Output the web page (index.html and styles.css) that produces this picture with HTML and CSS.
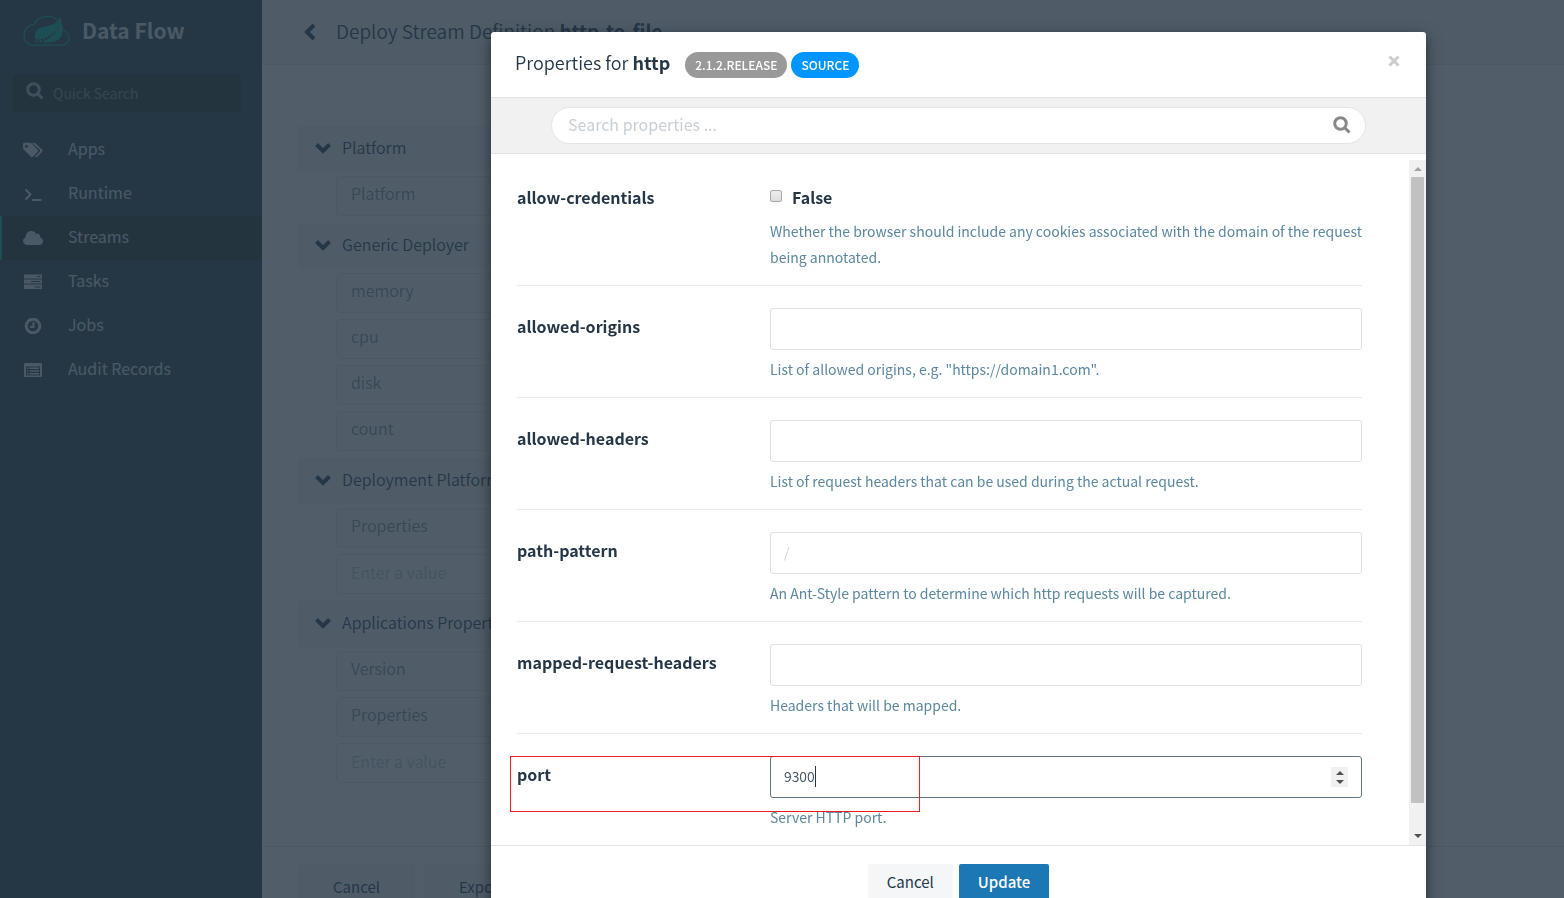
FILE: index.html
```html
<!DOCTYPE html>
<html lang="en">
  <head>
    <meta charset="utf-8" />
    <title>Data Flow</title>
    <link rel="stylesheet" href="styles.css">
  </head>
  <body>
    <div class="app">
      <aside class="sidebar">
        <div class="brand">
          <svg class="logo" viewBox="0 0 48 32">
            <path fill="none" stroke="currentColor" stroke-width="1.2" d="M10 30.500C4.500 30 1 26 1 20.500C1 14 5.500 10 11 9.500C13.500 4 18.500 1 24.500 1C30 1 35 3.500 38 7.500M38.500 8C40 10.500 40.500 13 40.500 15.500C44.500 16.500 47 19.500 47 23.500C47 27.500 43.500 30.500 39.500 30.500L10 30.500"/>
            <path fill="currentColor" d="M38 1.500C36.500 6 33 8.500 28 10C20 12 13 12 12.200 20C12 22 12.500 24 13.500 25C22 25 31 20 37 12C33 20 27 25 19 27.500C26 28 34 28 38 23C42 17 40 9 38 1.500Z"/>
            <path fill="none" stroke="currentColor" stroke-width="2" stroke-dasharray="2 2" d="M13 26.500C22 26.500 31 22 36 14"/>
          </svg>
          <span>Data Flow</span>
        </div>
        <label class="quick-search">
          <svg class="icon-search" viewBox="0 0 18 18"><circle cx="7.500" cy="7.500" r="5.800"/><path d="M12 12l4.500 4.500"/></svg>
          <input type="text" placeholder="Quick Search">
        </label>
        <nav class="menu">
          <a href="#apps">
            <svg viewBox="0 0 20 16"><path d="M0 2.200C0 1.400.6.800 1.400.800H6.500C7.300.800 8.300 1.200 8.900 1.800L14.800 7.700C15.400 8.300 15.400 9.100 14.800 9.700L9.900 14.700C9.300 15.300 8.500 15.300 7.900 14.700L1 7.800C.4 7.200 0 6.200 0 5.500ZM3.500 2.800A1.500 1.500 0 1 0 3.500 5.800A1.500 1.500 0 1 0 3.500 2.800Z"/><path d="M8.700.800H10.500C11.300.800 12.300 1.200 12.900 1.800L19.200 7.700C19.800 8.300 19.800 9.100 19.200 9.700L14.300 14.700C13.500 15.500 12.700 15.500 12 14.500L16.600 9.800C17.200 9.200 17.200 8.200 16.600 7.500Z"/></svg>
            Apps
          </a>
          <a href="#runtime">
            <svg viewBox="0 0 20 16"><path class="line" d="M2.500 3.500L7.500 8.500L2.500 13.500M9 14H18.500"/></svg>
            Runtime
          </a>
          <a href="#streams" class="active">
            <svg viewBox="0 0 20 16"><path d="M4.500 15C2 15 0 13.300 0 11C0 9.300 1 7.900 2.700 7.200C2.500 3.500 5 1 8.300 1C10.500 1 12.300 2.200 13.200 4C15.500 2.900 17.500 4.500 17 7.200C18.900 7.700 20 9.200 20 11.200C20 13.400 18.300 15 16.200 15Z"/></svg>
            Streams
          </a>
          <a href="#tasks">
            <svg viewBox="0 0 20 16"><path fill-rule="evenodd" d="M1 .5H19V4.500H1ZM14 2V3H17.500V2ZM1 5.500H19V9.500H1ZM8 7V8H17.500V7ZM1 10.500H19V15H1ZM11.500 12.500V13.500H17.500V12.500Z"/></svg>
            Tasks
          </a>
          <a href="#jobs">
            <svg viewBox="0 0 20 16"><circle class="ring" cx="10" cy="8" r="6.800"/><path class="hand" d="M10.500 4V9H7"/></svg>
            Jobs
          </a>
          <a href="#audit">
            <svg viewBox="0 0 20 16"><path fill-rule="evenodd" d="M2 1H18Q19 1 19 2V14Q19 15 18 15H2Q1 15 1 14V2Q1 1 2 1ZM3 4.500V13.500H17V4.500Z"/><path d="M4 5.500H5.500V7H4ZM6.500 5.500H16V7H6.500ZM4 8.200H5.500V9.700H4ZM6.500 8.200H16V9.700H6.500ZM4 11H5.500V12.500H4ZM6.500 11H16V12.500H6.500Z"/></svg>
            Audit Records
          </a>
        </nav>
      </aside>

      <main class="content">
        <header class="topbar">
          <svg class="back" viewBox="0 0 12 18"><path d="M10 2L3 9L10 16"/></svg>
          <h1>Deploy Stream Definition <b>http-to-file</b></h1>
        </header>
        <div class="builder">
          <section>
            <h2><svg class="chevron" viewBox="0 0 16 12"><path d="M1.500 2.500L8 9L14.500 2.500"/></svg>Platform</h2>
            <div class="cell">Platform</div>
          </section>
          <section>
            <h2><svg class="chevron" viewBox="0 0 16 12"><path d="M1.500 2.500L8 9L14.500 2.500"/></svg>Generic Deployer</h2>
            <div class="cell">memory</div>
            <div class="cell">cpu</div>
            <div class="cell">disk</div>
            <div class="cell">count</div>
          </section>
          <section>
            <h2><svg class="chevron" viewBox="0 0 16 12"><path d="M1.500 2.500L8 9L14.500 2.500"/></svg>Deployment Platform</h2>
            <div class="cell">Properties</div>
            <input class="cell" type="text" placeholder="Enter a value" aria-label="Deployment property">
          </section>
          <section>
            <h2><svg class="chevron" viewBox="0 0 16 12"><path d="M1.500 2.500L8 9L14.500 2.500"/></svg>Applications Properties</h2>
            <div class="cell">Version</div>
            <div class="cell">Properties</div>
            <input class="cell" type="text" placeholder="Enter a value" aria-label="Application property">
          </section>
        </div>
        <div class="actions">
          <button class="btn">Cancel</button>
          <button class="btn">Export</button>
        </div>
      </main>
    </div>

    <div class="backdrop">
      <div class="modal" role="dialog" aria-labelledby="modal-title">
        <header class="modal-header">
          <h4 id="modal-title">Properties for <b>http</b></h4>
          <span class="tag">2.1.2.RELEASE</span>
          <span class="tag tag-source">SOURCE</span>
          <button class="close" aria-label="Close"><svg viewBox="0 0 12 12"><path d="M1.500 1.500L10.500 10.500M10.500 1.500L1.500 10.500"/></svg></button>
        </header>
        <div class="modal-search">
          <label class="search-box">
            <input type="text" placeholder="Search properties ...">
            <svg class="icon-search" viewBox="0 0 18 18"><circle cx="7.500" cy="7.500" r="5.800"/><path d="M12 12l4.500 4.500"/></svg>
          </label>
        </div>
        <div class="modal-body">
          <div class="properties">
            <div class="property">
              <label class="name" for="credentials">allow-credentials</label>
              <div class="field">
                <label class="check"><input type="checkbox" id="credentials">False</label>
                <p>Whether the browser should include any cookies associated with the domain of the request being annotated.</p>
              </div>
            </div>
            <div class="property">
              <label class="name" for="origins">allowed-origins</label>
              <div class="field">
                <input type="text" id="origins">
                <p>List of allowed origins, e.g. "https://domain1.com".</p>
              </div>
            </div>
            <div class="property">
              <label class="name" for="headers">allowed-headers</label>
              <div class="field">
                <input type="text" id="headers">
                <p>List of request headers that can be used during the actual request.</p>
              </div>
            </div>
            <div class="property">
              <label class="name" for="pattern">path-pattern</label>
              <div class="field">
                <input type="text" id="pattern" placeholder="/">
                <p>An Ant-Style pattern to determine which http requests will be captured.</p>
              </div>
            </div>
            <div class="property">
              <label class="name" for="mapped">mapped-request-headers</label>
              <div class="field">
                <input type="text" id="mapped">
                <p>Headers that will be mapped.</p>
              </div>
            </div>
            <div class="property port">
              <label class="name" for="port">port</label>
              <div class="field">
                <input type="number" id="port" value="9300">
                <span class="caret"></span>
                <span class="spinner"><i class="arrow up"></i><i class="arrow"></i></span>
                <p>Server HTTP port.</p>
              </div>
              <div class="marker"></div>
            </div>
          </div>
          <div class="scrollbar">
            <i class="arrow up off"></i>
            <div class="thumb"></div>
            <i class="arrow"></i>
          </div>
        </div>
        <footer class="modal-footer">
          <button class="btn">Cancel</button>
          <button class="btn btn-primary">Update</button>
        </footer>
      </div>
    </div>
  </body>
</html>
```

FILE: styles.css
```css
* {
  box-sizing: border-box;
}

html, body {
  height: 100%;
  margin: 0;
  overflow: hidden;
}

body, input, button {
  font-family: "Noto Sans CJK SC", "Open Sans", sans-serif;
  font-size: 14px;
  color: #253746;
}

svg {
  flex: none;
}

h1, h2, h4, p {
  margin: 0;
  font-weight: 350;
}

b {
  font-weight: 700;
}

.app {
  display: flex;
  height: 100%;
}

/* sidebar */
.sidebar {
  flex: none;
  width: 262px;
  background: #253742;
  color: #dce0e0;
}

.brand {
  display: flex;
  align-items: center;
  gap: 12px;
  height: 62px;
  padding-left: 23px;
  font-size: 21px;
  font-weight: bold;
}

.brand span {
  padding-bottom: 2px;
}

.logo {
  width: 47px;
  height: 32px;
  color: #00a890;
}

.quick-search {
  display: flex;
  align-items: center;
  gap: 9px;
  height: 38px;
  margin: 12px 21px 16px 13px;
  padding-left: 13px;
  border-radius: 4px;
  background: #202822;
}

.quick-search input {
  flex: 1;
  min-width: 0;
  padding: 0;
  border: 0;
  background: none;
}

.quick-search input::placeholder {
  color: #77827c;
}

.icon-search {
  width: 18px;
  height: 18px;
  fill: none;
  stroke: currentColor;
  stroke-width: 3;
}

.quick-search .icon-search {
  margin-bottom: 4px;
  color: #a8b0b0;
}

.menu a {
  display: flex;
  align-items: center;
  gap: 25px;
  height: 44px;
  padding: 0 0 4px 21px;
  border-left: 2px solid transparent;
  color: #dce0e0;
  font-size: 16px;
  text-decoration: none;
}

.menu a.active {
  border-left-color: #00a890;
  background: #202822;
}

.menu svg {
  width: 20px;
  height: 16px;
  margin-top: 4px;
  fill: currentColor;
}

.menu .line, .menu .ring, .menu .hand {
  fill: none;
  stroke: currentColor;
  stroke-width: 2;
}

.menu .ring {
  stroke-width: 3;
}

/* page behind the dialog */
.content {
  flex: 1;
  min-width: 0;
  background: #fcf8f5;
}

.topbar {
  display: flex;
  align-items: center;
  gap: 20px;
  height: 65px;
  padding: 0 0 4px 42px;
  border-bottom: 1px solid #dde0e0;
  background: #f2efec;
}

.topbar h1 {
  font-size: 19px;
}

.back, .chevron {
  fill: none;
  stroke: currentColor;
  stroke-width: 4;
}

.back {
  width: 12px;
  height: 18px;
  margin-top: 4px;
}

.chevron {
  width: 16px;
  height: 12px;
  margin-top: 2px;
}

.builder {
  max-width: 1120px;
  padding: 61px 36px 56px;
}

.builder section {
  display: flex;
  flex-direction: column;
  gap: 6px;
  padding-bottom: 7px;
}

.builder h2 {
  display: flex;
  align-items: center;
  gap: 11px;
  height: 46px;
  margin-bottom: -2px;
  padding: 0 0 4px 17px;
  background: #f2efed;
  font-size: 16px;
}

.cell {
  height: 40px;
  margin-left: 38px;
  padding: 0 14px;
  border: 1px solid #e4e2e0;
  border-radius: 4px;
  background: #f7f4f2;
  color: #84868a;
  font-size: 16px;
  font-weight: 350;
  line-height: 32px;
}

input.cell {
  padding-bottom: 4px;
  background: none;
}

.cell::placeholder {
  color: #b8c0c0;
}

.actions {
  display: flex;
  gap: 9px;
  padding: 17px 36px;
  border-top: 1px solid #dde0e0;
}

.btn {
  height: 38px;
  padding: 0 19px 4px;
  border: 0;
  border-radius: 2px;
  background: #f4f6f8;
  font-size: 15px;
}

.actions .btn {
  height: 46px;
  padding: 0 35px 2px;
  background: #f2efed;
}

/* dialog */
.backdrop {
  position: fixed;
  inset: 0;
  padding: 32px 138px 0 491px;
  background: rgba(37, 55, 70, 0.8);
}

.modal {
  border-radius: 3px 3px 0 0;
  background: #fff;
  box-shadow: 0 5px 15px rgba(0, 0, 0, 0.5);
}

.modal-header {
  display: flex;
  align-items: center;
  gap: 4px;
  height: 66px;
  padding: 0 26px 0 24px;
  border-bottom: 1px solid #e1e3e5;
}

.modal-header h4 {
  margin-right: 11px;
  padding-bottom: 6px;
  font-size: 18px;
}

.tag {
  padding: 0 10px;
  border-radius: 13px;
  background: #999;
  color: #fff;
  font-size: 12px;
  font-weight: 500;
  line-height: 26px;
}

.tag-source {
  background: #0095ff;
}

.close {
  display: flex;
  margin-left: auto;
  padding: 0 0 8px;
  border: 0;
  background: none;
}

.close svg {
  width: 12px;
  height: 12px;
  fill: none;
  stroke: #ccc;
  stroke-width: 3;
}

.modal-search {
  padding: 9px 60px;
  border-bottom: 1px solid #e1e3e5;
  background: #f1f1f1;
}

.search-box {
  display: flex;
  align-items: center;
  height: 37px;
  padding: 0 14px 2px 16px;
  border: 1px solid #e1e5e8;
  border-radius: 19px;
  background: #fff;
  color: #888;
}

.search-box input {
  flex: 1;
  padding: 0 0 2px;
  border: 0;
  outline: 0;
  font-size: 16px;
}

::placeholder {
  color: #c8d0d6;
  opacity: 1;
}

.modal-body {
  display: flex;
  height: calc(100vh - 207px);
  overflow: hidden;
}

.properties {
  flex: 1;
  padding: 3px 47px 0 26px;
}

.property {
  position: relative;
  display: flex;
  padding: 22px 0 15px;
  border-bottom: 1px solid #e6eaed;
}

.name, .check {
  font-size: 16px;
  font-weight: bold;
}

.name {
  width: 253px;
  line-height: 36px;
}

.field {
  position: relative;
  flex: 1;
}

.field p {
  color: #5b879f;
  font-size: 14px;
  font-weight: 400;
  line-height: 26px;
}

.check {
  display: flex;
  align-items: center;
  gap: 10px;
  height: 39px;
  padding-bottom: 3px;
}

.check input {
  appearance: none;
  width: 12px;
  height: 12px;
  margin: 0 0 3px;
  border: 1px solid #aaa;
  border-radius: 2px;
  background: linear-gradient(#eee, #ddd);
}

.field > input {
  display: block;
  width: 100%;
  height: 42px;
  margin-bottom: 6px;
  padding: 0 13px 2px;
  border: 1px solid #dce1e5;
  border-radius: 3px;
  outline: 0;
  color: #40505c;
  font-size: 14px;
  font-weight: 350;
}

.port .field > input {
  appearance: textfield;
  border-color: #607580;
}

.caret {
  position: absolute;
  top: 10px;
  left: 45px;
  width: 1px;
  height: 21px;
  background: #253746;
}

.spinner {
  position: absolute;
  top: 11px;
  right: 14px;
  display: flex;
  flex-direction: column;
  align-items: center;
  justify-content: center;
  gap: 5px;
  width: 17px;
  height: 20px;
  background: #f0f0f0;
}

.arrow {
  border: 4px solid transparent;
  border-top-color: #505050;
  border-bottom: 0;
}

.arrow.up {
  transform: rotate(180deg);
}

.arrow.off {
  border-top-color: #a3a3a3;
}

.marker {
  position: absolute;
  top: 22px;
  left: -7px;
  width: 410px;
  height: 56px;
  border: 1px solid #ed1c24;
}

.scrollbar {
  display: flex;
  flex-direction: column;
  align-items: center;
  width: 17px;
  margin-top: 6px;
  padding: 7px 0;
  background: #f1f1f1;
}

.thumb {
  flex: 1;
  width: 13px;
  margin: 6px 0 31px;
  background: #c1c1c1;
}

.modal-footer {
  display: flex;
  justify-content: center;
  gap: 6px;
  padding: 18px;
  border-top: 1px solid #e1e3e5;
}

.btn-primary {
  background: #1b78b5;
  color: #fff;
  font-weight: 500;
}
```
